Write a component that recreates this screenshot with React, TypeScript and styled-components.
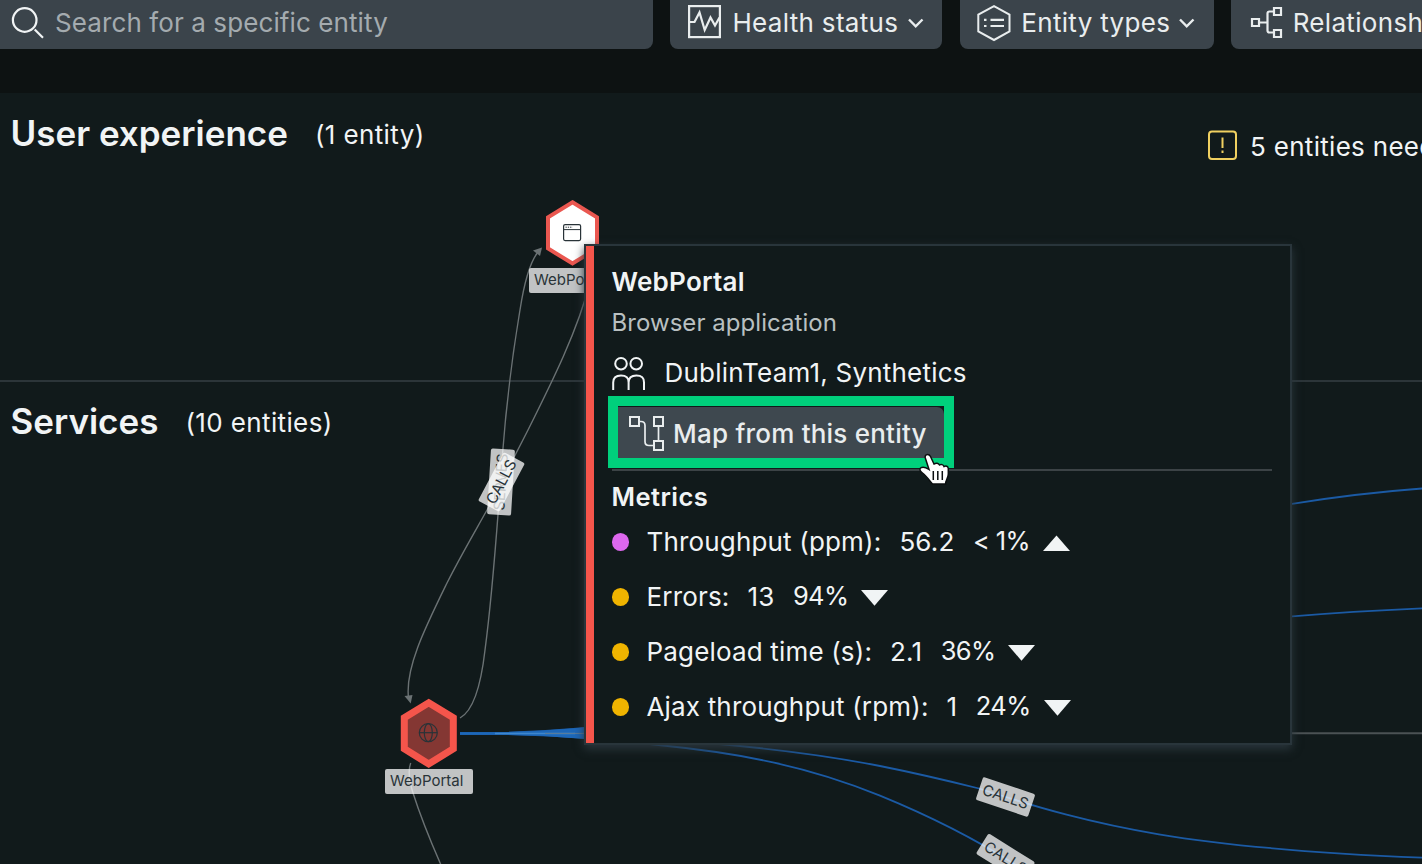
import React from "react";
import styled, { createGlobalStyle, css } from "styled-components";

const Global = createGlobalStyle`
  * { box-sizing: border-box; }
  html, body { margin: 0; padding: 0; background: #111a1b; overflow: hidden; }
  body { font-family: Inter, "Liberation Sans", sans-serif; color: #f1f4f5; }
  h1, h2, h3, p, ul { margin: 0; padding: 0; }
`;

const Page = styled.div`
  width: 1422px;
  height: 864px;
  overflow: hidden;
  position: relative;
  display: flex;
  flex-direction: column;
  background: #111a1b;
`;

const Toolbar = styled.header`
  flex: none;
  height: 93px;
  background: #0d1212;
  display: flex;
  align-items: flex-start;
  gap: 17.4px;
`;

const control = css`
  height: 57px;
  margin-top: -8px;
  padding-top: 14px;
  background: #3b444b;
  display: flex;
  align-items: flex-start;
  flex: none;
  font-size: 26px;
  line-height: 32px;
  white-space: nowrap;
`;

const ControlText = styled.span`
  margin-top: 1px;
`;

const SearchField = styled.div`
  ${control}
  width: 653px;
  border-radius: 0 8px 8px 0;
  padding-left: 11px;
  gap: 11px;
  color: #a4abaf;
  letter-spacing: 0.1px;
`;

const FilterButton = styled.div<{ $width: number; $pad: number; $gap: number }>`
  ${control}
  width: ${(p) => p.$width}px;
  padding-left: ${(p) => p.$pad}px;
  gap: ${(p) => p.$gap}px;
  border-radius: 8px;
  color: #e9edee;
  letter-spacing: 0.32px;
`;

const Icon = styled.svg`
  display: block;
  flex: none;
  fill: none;
  stroke: currentColor;
  overflow: visible;
`;

const SearchIcon = styled(Icon)`
  color: #f1f4f5;
`;

const ChevronIcon = styled(Icon)`
  margin: 13px 0 0 -2px;
`;

const Section = styled.section<{ $height: number; $top: number }>`
  flex: none;
  height: ${(p) => p.$height}px;
  padding: ${(p) => p.$top}px 0 0 10.5px;
  border-bottom: 2px solid #2c3539;
  display: flex;
  justify-content: space-between;
  align-items: flex-start;
`;

const SectionHeading = styled.div`
  display: flex;
  align-items: flex-start;
  gap: 27px;
`;

const SectionTitle = styled.h2`
  font-size: 35px;
  line-height: 42px;
  font-weight: 600;
`;

const SectionCount = styled.span`
  margin-top: 6.5px;
  font-size: 26px;
  line-height: 32px;
  letter-spacing: 0.38px;
`;

const Alert = styled.div`
  width: 214px;
  padding-top: 19px;
  display: flex;
  gap: 13px;
  font-size: 26px;
  line-height: 32px;
  letter-spacing: 0.3px;
  white-space: nowrap;
  overflow: hidden;
`;

const WarningIcon = styled(Icon)`
  color: #f0d060;
`;

const EdgeLayer = styled.svg`
  position: absolute;
  inset: 0;
  fill: none;
`;

const NodeShape = styled.svg<{ $x: number; $y: number }>`
  position: absolute;
  left: ${(p) => p.$x}px;
  top: ${(p) => p.$y}px;
  fill: none;
`;

const NodeLabel = styled.div<{ $x: number; $y: number }>`
  position: absolute;
  left: ${(p) => p.$x}px;
  top: ${(p) => p.$y}px;
  width: 88px;
  height: 25px;
  border-radius: 2px;
  background: rgba(255, 255, 255, 0.74);
  color: #293338;
  font-size: 15px;
  line-height: 23px;
  padding-left: 5px;
`;

const EdgeLabel = styled.div<{ $x: number; $y: number; $w: number; $angle: number }>`
  position: absolute;
  left: ${(p) => p.$x - p.$w / 2}px;
  top: ${(p) => p.$y - 12}px;
  width: ${(p) => p.$w}px;
  height: 24px;
  transform: rotate(${(p) => p.$angle}deg);
  border-radius: 2px;
  background: rgba(255, 255, 255, 0.74);
  color: #293338;
  font-size: 15px;
  line-height: 23px;
  text-align: center;
`;

const Popover = styled.aside`
  position: absolute;
  left: 584px;
  top: 244px;
  width: 708px;
  height: 501px;
  border: 2px solid #29353b;
  background: #111a1b;
  box-shadow: 0 4px 9px #2a363c;
`;

const PopoverBody = styled.div`
  height: 100%;
  border-left: 8px solid #f5554b;
  padding: 20px 18px 0 17.5px;
  display: flex;
  flex-direction: column;
`;

const EntityName = styled.h3`
  font-size: 26px;
  line-height: 32px;
  font-weight: 600;
  letter-spacing: 0.25px;
`;

const EntityType = styled.p`
  margin-top: 10px;
  font-size: 24px;
  line-height: 30px;
  letter-spacing: 0.05px;
  color: #b9c0c1;
`;

const Teams = styled.div`
  margin-top: 19px;
  display: flex;
  gap: 19px;
  height: 34px;
  font-size: 26px;
  line-height: 32px;
  letter-spacing: 0.22px;
`;

const TeamIcon = styled(Icon)`
  margin-top: -1px;
`;

const Highlight = styled.div`
  margin: 5px 0 0 -3.5px;
  width: 346px;
  height: 72px;
  border: 10px solid #00d07c;
  background: #111a1b;
  flex: none;
`;

const MapButton = styled.div`
  height: 51px;
  margin-top: 1px;
  background: #3e484f;
  border-radius: 0 7px 0 0;
  padding: 9px 0 0 11px;
  display: flex;
  gap: 9px;
  color: #e9edee;
  font-size: 26px;
  line-height: 32px;
  font-weight: 500;
  letter-spacing: 0.22px;
  white-space: nowrap;
`;

const MapButtonText = styled.span`
  margin-top: 2px;
`;

const Divider = styled.div`
  height: 2px;
  margin-top: 1px;
  background: #3c4346;
  flex: none;
`;

const MetricsTitle = styled.h3`
  margin-top: 10px;
  font-size: 25.5px;
  line-height: 32px;
  font-weight: 600;
  letter-spacing: 0.45px;
`;

const MetricList = styled.ul`
  list-style: none;
  margin-top: 13px;
  display: flex;
  flex-direction: column;
  gap: 23px;
`;

const MetricRow = styled.li`
  display: flex;
  height: 32px;
  align-items: center;
  font-size: 26px;
  line-height: 32px;
  letter-spacing: 0.17px;
  white-space: nowrap;
`;

const Dot = styled.span<{ $color: string }>`
  width: 17.5px;
  height: 18px;
  border-radius: 50%;
  background: ${(p) => p.$color};
  margin-right: 17.5px;
`;

const MetricLabel = styled.span`
  margin-right: 18px;
`;

const MetricValue = styled.span`
  margin-right: 18.5px;
`;

const MetricDelta = styled.span`
  margin: -2px 13px 0 0;
  font-size: 25.5px;
  letter-spacing: -0.65px;
`;

const TrendIcon = styled.svg`
  display: block;
  margin-top: 2px;
`;

const Pointer = styled.svg`
  position: absolute;
  left: 918px;
  top: 450px;
  overflow: visible;
`;

const Chevron = () => (
  <ChevronIcon width="16" height="10" viewBox="0 0 16 10" strokeWidth="2.4">
    <path d="M1 0.5l6.7 6.8L14.5 0.5" />
  </ChevronIcon>
);

const Trend = ({ up }: { up?: boolean }) => (
  <TrendIcon width="27" height="16" viewBox="0 0 27 16">
    <path d={up ? "M0 16L13.5 0.500L27 16Z" : "M0 0H27L13.5 15.700Z"} fill="#f1f4f5" />
  </TrendIcon>
);

const metrics = [
  { color: "#dd68ee", label: "Throughput (ppm):", value: "56.2", delta: "< 1%", up: true },
  { color: "#f0b400", label: "Errors:", value: "13", delta: "94%" },
  { color: "#f0b400", label: "Pageload time (s):", value: "2.1", delta: "36%" },
  { color: "#f0b400", label: "Ajax throughput (rpm):", value: "1", delta: "24%" },
];

export default function App() {
  return (
    <>
      <Global />
      <Page>
        <Toolbar>
          <SearchField>
            <SearchIcon width="33" height="32" viewBox="0 0 33 32" strokeWidth="2.2">
              <circle cx="13.7" cy="14" r="11.8" />
              <path d="M23.700 23.500L32 31.700" />
            </SearchIcon>
            <ControlText>Search for a specific entity</ControlText>
          </SearchField>
          <FilterButton $width={272} $pad={17.5} $gap={11.5}>
            <Icon width="33" height="33" viewBox="0 0 33 33" strokeWidth="2.2">
              <rect x="1.1" y="0.1" width="30.8" height="31" />
              <path d="M2 16h4.500l5-9.500 5.200 17.500 5.800-12.500 4.500 8 4.500-8" />
            </Icon>
            <ControlText>Health status</ControlText>
            <Chevron />
          </FilterButton>
          <FilterButton $width={254} $pad={17.2} $gap={10.3}>
            <Icon width="34" height="35" viewBox="0 0 34 35" strokeWidth="2">
              <path d="M17 0.200L32.500 8.600V25.500L17 34L1.300 25.500V8.600Z" />
              <path d="M7 13.800h2.500M7 20h2.500M13.500 13.800H27M13.500 20H27" strokeWidth="2.200" />
            </Icon>
            <ControlText>Entity types</ControlText>
            <Chevron />
          </FilterButton>
          <FilterButton $width={300} $pad={20} $gap={10.5}>
            <Icon width="31" height="32" viewBox="0 0 31 32" strokeWidth="2.2">
              <path d="M1 13h7v7H1zM23 2h7v7h-7zM23 24h7v7h-7zM8 16.500h8.500M23 5.500h-4.500q-2 0-2 2v17q0 2 2 2H23" />
            </Icon>
            <ControlText>Relationships</ControlText>
          </FilterButton>
        </Toolbar>

        <Section $height={289} $top={19}>
          <SectionHeading>
            <SectionTitle>User experience</SectionTitle>
            <SectionCount>(1 entity)</SectionCount>
          </SectionHeading>
          <Alert>
            <WarningIcon width="29" height="30" viewBox="0 0 29 30" strokeWidth="2">
              <rect x="1" y="0.500" width="27" height="27.500" rx="3" />
              <path d="M14.500 6.500v10.500M14.500 19.500v2.500" />
            </WarningIcon>
            <span>5 entities need attention</span>
          </Alert>
        </Section>
        <Section $height={520} $top={18}>
          <SectionHeading>
            <SectionTitle>Services</SectionTitle>
            <SectionCount>(10 entities)</SectionCount>
          </SectionHeading>
        </Section>

        <EdgeLayer width="1422" height="864" viewBox="0 0 1422 864">
          <g stroke="#6b7274" strokeWidth="1.4">
            <path d="M460 718C473 711 481 685 485 650C493 590 497 530 502 460C508 380 515 340 520 310C524 284 530 262 538 252" />
            <path d="M590 282C578 330 552 382 528 430L487 510C473 535 460 557 447 583C425 628 405 668 408.500 698" />
            <path d="M410.700 763C408 770 409 780 412.700 792C420 815 430 840 441 865" />
          </g>
          <path d="M542 247.500L533 250.500L540 256Z" fill="#6b7274" />
          <path d="M404.500 696L412.500 695L410.700 703.500Z" fill="#6b7274" />
          <path d="M1291 733.300H1422" stroke="#4b5254" strokeWidth="2" />
          <g stroke="#1b5aa4" strokeWidth="1.800">
            <path d="M460 733.500C600 733.500 760 742 880 766C915 773 945 780 979 788.500C1100 828 1190 848 1422 857.700" />
            <path d="M460 733.500C560 733.500 620 740 663 745.500C740 753 810 767 880 795.700C932 817 985 843 1035 878" />
            <path d="M460 733.500C900 733.500 900 560 1292 503.800C1335 497 1375 492 1422 488.500" />
            <path d="M460 733.500C850 733.500 850 650 1292 616.300Q1350 611.500 1422 608.300" />
          </g>
          <path d="M460 732.300L500 732.300L540 730.800L585 727.500V739L540 735.800L500 734.800H460Z" fill="#1d67b8" />
          <path d="M495 733.400H575" stroke="#3f86cc" strokeWidth="1.500" />
          <path d="M545 733.400H585" stroke="#5c7c98" strokeWidth="1" />
        </EdgeLayer>

        <EdgeLabel $x={501} $y={482} $w={66} $angle={-86.5}>SERVES</EdgeLabel>
        <EdgeLabel $x={501} $y={482} $w={55} $angle={-62}>CALLS</EdgeLabel>
        <EdgeLabel $x={1005.5} $y={797} $w={55} $angle={18.5}>CALLS</EdgeLabel>
        <EdgeLabel $x={1005} $y={857.5} $w={55} $angle={32}>CALLS</EdgeLabel>

        <NodeShape $x={546} $y={200} width="53" height="66" viewBox="0 0 53 66">
          <path d="M26.500 2.300L51 17.300V48.500L26.500 63.500L2 48.500V17.300Z" fill="#fff" stroke="#ea5750" strokeWidth="4" />
          <rect x="17.600" y="24.600" width="17" height="16" rx="1.500" stroke="#293338" strokeWidth="1.200" />
          <path d="M17.600 29.600h17" stroke="#293338" />
          <path d="M19.500 27.200h7" stroke="#293338" strokeDasharray="1.300 1" />
        </NodeShape>
        <NodeLabel $x={529} $y={268}>WebPortal</NodeLabel>
        <NodeShape $x={400} $y={698} width="57" height="71" viewBox="0 0 57 71">
          <path d="M28.700 4.800L53.300 19.800V50.800L28.700 66L4.300 50.800V19.800Z" fill="#843733" stroke="#f5554b" strokeWidth="7" />
          <g stroke="#293338" strokeWidth="1.200">
            <circle cx="28.300" cy="34.700" r="9" />
            <ellipse cx="28.300" cy="34.700" rx="4" ry="9" />
            <path d="M19 34.700h18" />
          </g>
        </NodeShape>
        <NodeLabel $x={385} $y={769}>WebPortal</NodeLabel>

        <Popover>
          <PopoverBody>
            <EntityName>WebPortal</EntityName>
            <EntityType>Browser application</EntityType>
            <Teams>
              <TeamIcon width="34" height="34" viewBox="0 0 34 34" strokeWidth="2">
                <circle cx="9" cy="7.700" r="5.800" />
                <circle cx="24.200" cy="7.700" r="5.800" />
                <path d="M1.200 34V26.500q0-7 7.800-7t7.600 7V34M16.600 26.500q0-7 7.800-7t7.600 7V34" />
              </TeamIcon>
              <span>DublinTeam1, Synthetics</span>
            </Teams>
            <Highlight>
              <MapButton>
                <Icon width="35" height="35" viewBox="0 0 35 35" strokeWidth="2">
                  <path d="M1 1h9v9H1zM25 1h9v9h-9zM25 25h9v9h-9z" />
                  <path d="M10 5.500h2q4 0 4 4v16q0 4 4 4h5M29.500 10v15" strokeWidth="1.700" />
                </Icon>
                <MapButtonText>Map from this entity</MapButtonText>
              </MapButton>
            </Highlight>
            <Divider />
            <MetricsTitle>Metrics</MetricsTitle>
            <MetricList>
              {metrics.map((m) => (
                <MetricRow key={m.label}>
                  <Dot $color={m.color} />
                  <MetricLabel>{m.label}</MetricLabel>
                  <MetricValue>{m.value}</MetricValue>
                  <MetricDelta>{m.delta}</MetricDelta>
                  <Trend up={m.up} />
                </MetricRow>
              ))}
            </MetricList>
          </PopoverBody>
        </Popover>

        <Pointer width="34" height="38" viewBox="0 0 34 38">
          <path
            d="M9.500 4.500C7.500 4.500 6.800 6.300 7.300 8L11 19.500C8 17.500 4.500 16.500 2.500 18C1 19.500 2.500 21.500 4.500 23C8.500 26 11 30 14.500 34H27.500C27.500 30.500 30.300 28 30.300 24V18.500C30 16 28 15.500 26 16.500C25.500 14.500 23 14 21.500 15C20.500 13 18 12.800 16 14L12.500 6.500C11.800 5 10.800 4.500 9.500 4.500Z"
            fill="#fff"
            stroke="#0b0f10"
            strokeWidth="1.500"
          />
          <path d="M15.300 21v9M19.800 21v9M24.300 21v9" stroke="#0b0f10" strokeWidth="1.500" />
        </Pointer>
      </Page>
    </>
  );
}
